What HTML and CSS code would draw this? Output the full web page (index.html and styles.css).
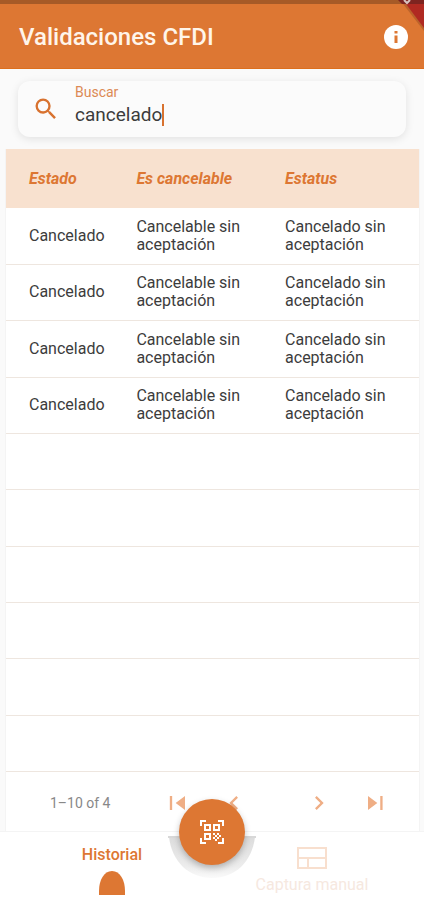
FILE: index.html
```html
<!DOCTYPE html>
<html lang="es">
<head>
  <meta charset="UTF-8" />
  <meta name="viewport" content="width=device-width, initial-scale=1.0" />
  <title>Validaciones CFDI</title>
  <link rel="stylesheet" href="styles.css">
</head>
<body>
  <header class="topbar">
    <h1>Validaciones CFDI</h1>
    <button class="info" aria-label="Información">
      <svg viewBox="0 0 24 24" width="24" height="24"><circle cx="12" cy="12" r="12" fill="#fff"/><path d="M10.500 6h3v2.500h-3zM10.500 10.500h3V18h-3z" fill="#dd7733"/></svg>
    </button>
    <svg class="ribbon" viewBox="0 0 26 32" width="26" height="32">
      <path d="M2 0h24v31z" fill="#7a3f1c" opacity=".35"/>
      <path d="M5 0h21v28z" fill="#b02a22"/>
      <path d="M0 0h26v4H4z" fill="#7d2420"/>
      <path d="M6 0l3 3 3-3" fill="none" stroke="#d8c4c0" stroke-width="2"/>
    </svg>
  </header>

  <main>
    <div class="search">
      <svg viewBox="0 0 24 24" width="28" height="28"><path fill="#d8722f" d="M15.500 14h-.79l-.28-.27A6.470 6.470 0 0 0 16 9.500 6.500 6.500 0 1 0 9.500 16c1.610 0 3.090-.59 4.230-1.570l.27.28v.79l5 4.990L20.490 19l-4.990-5zm-6 0a4.500 4.500 0 1 1 0-9 4.500 4.500 0 0 1 0 9z"/></svg>
      <div class="field">
        <label for="q">Buscar</label>
        <div class="entry">
          <input type="text" id="q" value="cancelado" size="8" />
          <span class="caret"></span>
        </div>
      </div>
    </div>

    <section class="card">
      <table>
        <thead>
          <tr><th>Estado</th><th>Es cancelable</th><th>Estatus</th></tr>
        </thead>
        <tbody>
          <tr><td>Cancelado</td><td>Cancelable sin aceptación</td><td>Cancelado sin aceptación</td></tr>
          <tr><td>Cancelado</td><td>Cancelable sin aceptación</td><td>Cancelado sin aceptación</td></tr>
          <tr><td>Cancelado</td><td>Cancelable sin aceptación</td><td>Cancelado sin aceptación</td></tr>
          <tr><td>Cancelado</td><td>Cancelable sin aceptación</td><td>Cancelado sin aceptación</td></tr>
          <tr><td></td><td></td><td></td></tr>
          <tr><td></td><td></td><td></td></tr>
          <tr><td></td><td></td><td></td></tr>
          <tr><td></td><td></td><td></td></tr>
          <tr><td></td><td></td><td></td></tr>
          <tr><td></td><td></td><td></td></tr>
        </tbody>
      </table>
      <div class="pager">
        <span class="range">1–10 of 4</span>
        <button aria-label="Primera página">
          <svg viewBox="0 0 24 24" width="28" height="28"><path d="M18 6v12l-8-6zM5 6h2v12H5z"/></svg>
        </button>
        <button aria-label="Página anterior">
          <svg viewBox="0 0 24 24" width="28" height="28"><path d="M15.410 7.410L14 6l-6 6 6 6 1.410-1.410L10.830 12z"/></svg>
        </button>
        <button class="next" aria-label="Página siguiente">
          <svg viewBox="0 0 24 24" width="28" height="28"><path d="M10 6L8.590 7.410 13.170 12l-4.580 4.590L10 18l6-6z"/></svg>
        </button>
        <button aria-label="Última página">
          <svg viewBox="0 0 24 24" width="28" height="28"><path d="M6 18l8-6-8-6zM16.500 6h2v12h-2z"/></svg>
        </button>
      </div>
    </section>
  </main>

  <nav class="tabs">
    <a href="#historial" class="tab active">
      <span>Historial</span>
      <svg viewBox="0 0 26 24" width="26" height="24"><path d="M0 24v-4C0 9 5 0 13 0s13 9 13 20v4z" fill="#dd7733"/></svg>
    </a>
    <a href="#captura" class="tab">
      <svg viewBox="0 0 30 22" width="30" height="22" fill="none" stroke="#f8dfce" stroke-width="2"><path d="M1 1h28v20H1zM1 11h28M11 11v10"/></svg>
      <span>Captura manual</span>
    </a>
    <svg class="notch" viewBox="0 0 90 52" width="90" height="52">
      <defs>
        <linearGradient id="shade" x1="0" y1="0" x2="0" y2="1">
          <stop offset="0" stop-color="#dcdcdc"/>
          <stop offset=".7" stop-color="#ececec"/>
          <stop offset="1" stop-color="#fafafa"/>
        </linearGradient>
      </defs>
      <path d="M2 5h86C85 30 68 46 45 46S5 30 2 5z" fill="url(#shade)"/>
      <path d="M1 5h88" stroke="#d8d8d8" stroke-width="2"/>
    </svg>
    <button class="scan" aria-label="Escanear código">
      <svg viewBox="0 0 24 24" width="24" height="24" fill="none" stroke="#fff" stroke-width="2">
        <path d="M1 6V1h5M18 1h5v5M23 18v5h-5M6 23H1v-5"/>
        <path d="M5 5h5v5H5zM14 5h5v5h-5zM5 14h5v5H5z"/>
        <path d="M13 13h2v2h-2zM17 13h2v2h-2zM15 15h2v2h-2zM13 17h2v2h-2zM17 17h2v2h-2zM19 15h2v2h-2zM15 19h2v2h-2z" fill="#fff" stroke="none"/>
      </svg>
    </button>
  </nav>
</body>
</html>
```
FILE: styles.css
```css
* {
  box-sizing: border-box;
}

body {
  font-family: Roboto, "Liberation Sans", sans-serif;
  margin: 0;
  min-height: 100vh;
  display: flex;
  flex-direction: column;
  background: #fafafa;
  color: #3c3c3c;
}

button {
  border: none;
  background: none;
  padding: 0;
  cursor: pointer;
}

svg {
  display: block;
}

.topbar {
  position: relative;
  display: flex;
  align-items: center;
  justify-content: space-between;
  height: 69px;
  padding: 2px 16px 0 19px;
  border-top: 4px solid #a65a27;
  border-bottom: 1px solid #dd6f1c;
  background: #dd7733;
}

.topbar h1 {
  margin: 0;
  font-size: 24px;
  font-weight: 500;
  color: #fff5ea;
}

.ribbon {
  position: absolute;
  top: -4px;
  right: 0;
}

main {
  flex: 1;
  display: flex;
  flex-direction: column;
}

.search {
  display: flex;
  align-items: center;
  gap: 15px;
  height: 56px;
  margin: 12px 18px;
  padding: 0 14px;
  border-radius: 12px;
  background: #fbfbfb;
  box-shadow: 0 2px 8px rgba(0, 0, 0, 0.1);
}

.field {
  flex: 1;
  padding-bottom: 6px;
}

.field label {
  display: block;
  font-size: 14px;
  line-height: 18px;
  color: #dc8a55;
}

.entry {
  display: flex;
  align-items: center;
}

.entry input {
  field-sizing: content;
  border: none;
  outline: none;
  padding: 0;
  background: transparent;
  font: 19px/28px Roboto, "Liberation Sans", sans-serif;
  color: #3c3c3c;
}

.caret {
  width: 2px;
  height: 22px;
  background: #d8722f;
}

.card {
  flex: 1;
  display: flex;
  flex-direction: column;
  margin: 0 4px 0 5px;
  background: #fff;
  border: solid #f4f4f4;
  border-width: 0 1px;
}

table {
  width: 100%;
  table-layout: fixed;
  border-collapse: collapse;
}

th {
  height: 59px;
  padding: 0 0 0 23px;
  background: #f8e1cf;
  font-size: 16px;
  font-weight: 700;
  font-style: italic;
  text-align: left;
  color: #dd7733;
}

th:nth-child(1) {
  width: 26%;
}

th:nth-child(2) {
  width: 36%;
}

td {
  height: 56px;
  padding: 0 12px 0 23px;
  border-bottom: 1px solid #eee6df;
  font-size: 16px;
  line-height: 18px;
}

td:first-child {
  padding-right: 0;
}

tr:nth-child(3n) td {
  height: 57px;
}

.pager {
  flex: 1;
  display: flex;
  align-items: center;
  padding: 4px 30px 0 44px;
}

.pager button {
  width: 28px;
  margin-left: 28px;
  fill: #efae85;
}

.pager .next {
  margin-left: 57px;
}

.range {
  flex: 1;
  font-size: 14px;
  color: #888;
}

.tabs {
  position: relative;
  display: grid;
  grid-template-columns: 1fr 1fr;
  height: 69px;
  padding: 0 12px;
  border-top: 1px solid #f4f4f4;
  background: #fff;
}

.tab {
  display: flex;
  flex-direction: column;
  align-items: center;
  justify-content: flex-end;
  gap: 6px;
  padding-bottom: 5px;
  font-size: 16px;
  line-height: 20px;
  text-decoration: none;
  color: #f6e8df;
}

.active {
  font-weight: 500;
  color: #dd7733;
}

.notch {
  position: absolute;
  top: 0;
  left: calc(50% - 45px);
}

.scan {
  position: absolute;
  top: -33px;
  left: calc(50% - 33px);
  width: 66px;
  height: 66px;
  border-radius: 50%;
  background: #dd7733;
  box-shadow: 0 3px 6px rgba(0, 0, 0, 0.25);
}

.scan svg {
  margin: auto;
}
```
